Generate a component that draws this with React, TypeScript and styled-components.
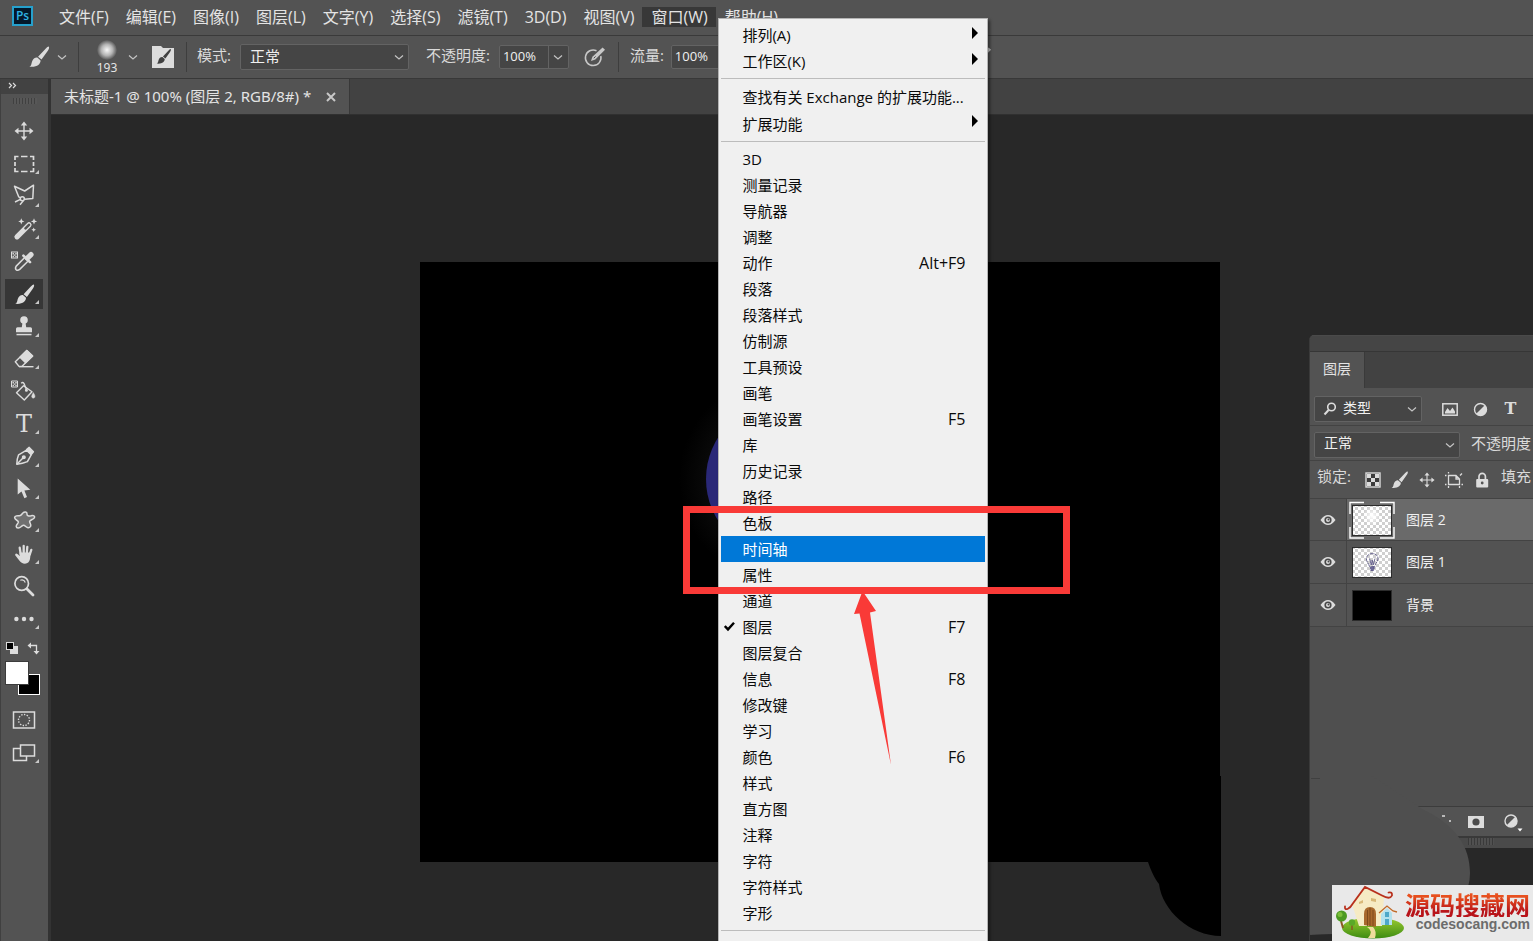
import React from "react";
import styled, { createGlobalStyle, css } from "styled-components";

const GlobalStyle = createGlobalStyle`
  *, *::before, *::after { box-sizing: border-box; }
  html, body { margin: 0; padding: 0; }
  body {
    background: #282828;
    color: #e4e4e4;
    font-family: "Open Sans", "Noto Sans CJK SC", sans-serif;
    font-size: 15px;
    overflow: hidden;
  }
  button, input, select {
    font: inherit;
    color: inherit;
    background: none;
    border: 0;
    padding: 0;
    margin: 0;
    outline: none;
    border-radius: 0;
  }
`;

const ink = "#dcdcdc";

/* ---------- page frame ---------- */

const Page = styled.div`
  position: relative;
  display: flex;
  flex-direction: column;
  height: 100vh;
  overflow: hidden;
  background: #282828;
`;

const MenuBar = styled.nav`
  display: flex;
  align-items: center;
  flex: none;
  height: 35px;
  padding-left: 12px;
  background: #535353;
`;

const Logo = styled.div`
  display: flex;
  align-items: center;
  justify-content: center;
  width: 21px;
  height: 20px;
  margin: 0 17px 4px 0;
  border: 2px solid #26a0cc;
  background: #04182a;
  color: #2fb4e4;
  font-size: 12px;
  font-weight: 600;
  line-height: 16px;
`;

const Titles = styled.div`
  display: flex;
`;

const MenuEntry = styled.div`
  position: relative;
`;

const MenuTitle = styled.button<{ $open?: boolean }>`
  display: block;
  height: 20px;
  margin-bottom: 1px;
  padding: 0 8px 0 9px;
  font-size: 16px;
  line-height: 18px;
  white-space: nowrap;
  background: ${(p) => (p.$open ? "#383838" : "transparent")};
`;

/* ---------- drop-down menu ---------- */

const Dropdown = styled.div`
  position: absolute;
  z-index: 5;
  top: 11px;
  left: 76px;
  width: 270px;
  padding: 3px 2px 24px;
  border: 1px solid #b4b4b4;
  background: #f0f0f0;
  box-shadow: 2px 2px 3px rgba(0, 0, 0, 0.45);
  color: #0a0a0a;
`;

const MenuItem = styled.button<{ $active?: boolean; $tall?: boolean }>`
  display: flex;
  align-items: center;
  position: relative;
  width: 100%;
  height: ${(p) => (p.$tall ? 27 : 26)}px;
  padding: 0 20px 0 21px;
  font-size: 15px;
  line-height: 24px;
  text-align: left;
  white-space: nowrap;
  ${(p) =>
    p.$active &&
    css`
      background: #0078d7;
      color: #fff;
    `}
`;

const ItemLabel = styled.span`
  flex: 1;
`;

const ItemKeys = styled.span`
  font-size: 16px;
`;

const ItemMark = styled.svg<{ $side: "left" | "right" }>`
  position: absolute;
  top: ${(p) => (p.$side === "left" ? 7 : 5)}px;
  ${(p) => (p.$side === "left" ? "left: 3px;" : "right: 7px;")}
`;

const Separator = styled.hr`
  height: 1px;
  margin: 4px 0;
  border: 0;
  background: #bcbcbc;
`;

/* ---------- options bar ---------- */

const OptionsBar = styled.div`
  display: flex;
  align-items: center;
  flex: none;
  height: 44px;
  padding-left: 28px;
  border-top: 1px solid #3a3a3a;
  border-bottom: 1px solid #383838;
  background: #535353;
`;

const IconButton = styled.button<{ $w: number }>`
  display: flex;
  align-items: center;
  justify-content: center;
  flex: none;
  width: ${(p) => p.$w}px;
  height: 30px;
  max-height: 100%;
`;

const Spacer = styled.span<{ $w: number }>`
  flex: none;
  width: ${(p) => p.$w}px;
`;

const Divider = styled.i<{ $before?: number; $after?: number }>`
  flex: none;
  width: 1px;
  height: 30px;
  margin: 0 ${(p) => p.$after ?? 0}px 0 ${(p) => p.$before ?? 0}px;
  background: #3e3e3e;
`;

const BrushTip = styled.button`
  display: flex;
  flex-direction: column;
  align-items: center;
  width: 26px;
  font-family: "Noto Sans", sans-serif;
  font-size: 12px;
  line-height: 15px;
`;

const TipDot = styled.span`
  width: 20px;
  height: 20px;
  border-radius: 50%;
  background: radial-gradient(circle, #f0f0f0 5%, #b4b4b4 40%, #535353 72%);
`;

const FieldLabel = styled.label`
  flex: none;
  padding-bottom: 4px;
  font-size: 15px;
  line-height: 20px;
  color: #dadada;
  white-space: nowrap;
`;

const SelectBox = styled.span<{ $w: number }>`
  display: flex;
  align-items: center;
  position: relative;
  flex: none;
  width: ${(p) => p.$w}px;
  height: 26px;
  border: 1px solid #636363;
  border-radius: 2px;
  background: #454545;
  svg {
    position: absolute;
    right: 4px;
    pointer-events: none;
  }
`;

const Select = styled.select<{ $indent?: number; $small?: boolean }>`
  appearance: none;
  width: 100%;
  height: 100%;
  padding: 0 18px 3px ${(p) => p.$indent ?? 9}px;
  font-size: ${(p) => (p.$small ? 14 : 15)}px;
  line-height: 20px;
  color: #f0f0f0;
`;

const ValueBox = styled.span`
  display: flex;
  flex: none;
  height: 24px;
  border: 1px solid #636363;
  border-radius: 2px;
  background: #454545;
`;

const ValueInput = styled.input`
  width: 49px;
  padding: 0 0 2px 3px;
  border-right: 1px solid #636363;
  font-size: 13px;
  line-height: 20px;
  color: #f0f0f0;
`;

/* ---------- body ---------- */

const Body = styled.div`
  display: flex;
  flex: 1;
  min-height: 0;
`;

const ToolColumn = styled.aside`
  flex: none;
  width: 51px;
  border-left: 1px solid #404040;
  border-right: 3px solid #333;
  background: #535353;
`;

const ToolHeader = styled.div`
  display: flex;
  align-items: center;
  height: 15px;
  padding: 0 0 2px 7px;
  background: #424242;
`;

const Grip = styled.div`
  width: 24px;
  height: 6px;
  margin: 4px auto 11px 12px;
  background: repeating-linear-gradient(90deg, #404040 0 1px, #575757 1px 3px);
`;

const ToolList = styled.div`
  display: flex;
  flex-direction: column;
  height: 520px;
  padding-left: 4px;
`;

const Tool = styled.button<{ $active?: boolean; $corner?: boolean }>`
  display: flex;
  align-items: center;
  justify-content: center;
  position: relative;
  flex: 1;
  width: 38px;
  min-height: 0;
  border: solid #535353;
  border-width: 1px 0;
  background: ${(p) => (p.$active ? "#363636" : "transparent")};
  ${(p) =>
    p.$corner &&
    css`
      &::after {
        content: "";
        position: absolute;
        right: 4px;
        bottom: 5px;
        border: 2px solid transparent;
        border-right-color: #c8c8c8;
        border-bottom-color: #c8c8c8;
      }
    `}
`;

const ColorArea = styled.div`
  display: flex;
  flex-direction: column;
  height: 66px;
  padding: 6px 4px 0 4px;
`;

const ModeList = styled.div`
  display: flex;
  flex-direction: column;
  height: 66px;
  margin-top: 2px;
  padding-left: 4px;
`;

const Workspace = styled.main`
  display: flex;
  flex-direction: column;
  flex: 1;
  min-width: 0;
`;

const TabBar = styled.div`
  display: flex;
  flex: none;
  height: 36px;
  background: #424242;
  border-bottom: 1px solid #303030;
`;

const DocTab = styled.div`
  display: flex;
  align-items: center;
  gap: 15px;
  height: 35px;
  padding: 0 13px 2px;
  border-right: 1px solid #383838;
  background: #535353;
  font-family: "Noto Sans", "Noto Sans CJK SC", sans-serif;
  font-size: 15px;
  line-height: 20px;
  white-space: nowrap;
`;

const Stage = styled.div`
  position: relative;
  flex: 1;
  background: #282828;
  overflow: hidden;
`;

const Artboard = styled.svg`
  position: absolute;
  left: 369px;
  top: 147px;
`;

/* ---------- layers panel ---------- */

const Panel = styled.section`
  position: absolute;
  right: 0;
  top: 220px;
  bottom: 0;
  display: flex;
  flex-direction: column;
  width: 224px;
  border-left: 1px solid #3a3a3a;
  border-radius: 5px 0 0 0;
  overflow: hidden;
  background: #4f4f4f;
  white-space: nowrap;
`;

const PanelHandle = styled.div`
  flex: none;
  height: 17px;
  border-top: 1px solid #4a4a4a;
  border-bottom: 1px solid #363636;
  background: #454545;
`;

const PanelTabs = styled.div`
  display: flex;
  flex: none;
  height: 36px;
  background: #424242;
`;

const PanelTab = styled.button`
  width: 55px;
  padding-bottom: 3px;
  border-right: 1px solid #3a3a3a;
  background: #535353;
  font-size: 14px;
  line-height: 20px;
`;

const PanelRow = styled.div<{ $h: number; $gap: number; $top?: number }>`
  display: flex;
  align-items: center;
  flex: none;
  gap: ${(p) => p.$gap}px;
  height: ${(p) => p.$h}px;
  padding: ${(p) => p.$top ?? 0}px 0 0 4px;
  border-bottom: 1px solid #434343;
  background: #535353;
`;

const FilterIcons = styled.div`
  display: flex;
  align-items: center;
  gap: 15px;
`;

const RowLabel = styled(FieldLabel)<{ $left?: number; $right?: number }>`
  padding: 0 ${(p) => p.$right ?? 0}px 8px ${(p) => p.$left ?? 0}px;
`;

const FilterGlass = styled.svg`
  left: 8px;
  && {
    right: auto;
  }
`;

const LayerRow = styled.div<{ $selected?: boolean }>`
  display: flex;
  flex: none;
  height: ${(p) => (p.$selected ? 42 : 43)}px;
  border-bottom: 1px solid #434343;
  background: ${(p) => (p.$selected ? "#6a6a6a" : "#535353")};
`;

const EyeButton = styled.button`
  width: 37px;
  border-right: 1px solid #434343;
  background: #535353;
  svg {
    display: block;
    margin: auto;
  }
`;

const LayerName = styled.button`
  display: flex;
  align-items: center;
  gap: 11px;
  flex: 1;
  padding-left: 2px;
  font-size: 14px;
  line-height: 20px;
  color: #f0f0f0;
`;

const PanelFooter = styled.div`
  display: flex;
  align-items: center;
  flex: none;
  gap: 18px;
  height: 32px;
  margin-top: 179px;
  padding-left: 157px;
  border-top: 1px solid #3c3c3c;
  border-bottom: 2px solid #393939;
  background: #535353;
`;

const FooterGrip = styled.div`
  flex: none;
  height: 10px;
  padding-left: 158px;
  background: #4a4a4a;
  &::before {
    content: "";
    display: block;
    width: 26px;
    height: 7px;
    background: repeating-linear-gradient(90deg, #3a3a3a 0 1px, #505050 1px 3px);
  }
`;

const PanelVoid = styled.div`
  flex: 1;
  background: #282828;
`;

const Smudge = styled.svg`
  position: absolute;
  left: 0;
  bottom: 0;
`;

/* ---------- overlays ---------- */

const Highlight = styled.div`
  position: absolute;
  z-index: 6;
  left: 683px;
  top: 506px;
  width: 387px;
  height: 88px;
  border: 7px solid #f93a37;
  pointer-events: none;
`;

const Pointer = styled.svg`
  position: absolute;
  z-index: 6;
  left: 850px;
  top: 588px;
  pointer-events: none;
`;

const SiteMark = styled.a`
  position: absolute;
  z-index: 7;
  right: 0;
  bottom: 0;
  display: flex;
  width: 201px;
  height: 56px;
  background: #e9e9e9;
  text-decoration: none;
`;

const SiteText = styled.span`
  display: flex;
  flex-direction: column;
  align-items: flex-end;
  padding-top: 6px;
`;

const SiteTitle = styled.span`
  font-family: "Noto Sans CJK SC", sans-serif;
  font-size: 25px;
  font-weight: 700;
  line-height: 26px;
  background: linear-gradient(#e8501e 20%, #b8141a 80%);
  background-clip: text;
  -webkit-background-clip: text;
  color: transparent;
`;

const SiteHost = styled.span`
  font-family: "Liberation Sans", sans-serif;
  font-size: 14px;
  font-weight: 700;
  line-height: 14px;
  color: #6c6c6c;
`;

/* ---------- icons ---------- */

const Chevron = () => (
  <svg width="10" height="10" viewBox="0 0 10 10" fill="none" stroke="#c4c4c4" strokeWidth="1.2">
    <path d="M1 3.5 5 7 9 3.5" />
  </svg>
);

const BrushShape = ({ fill = ink }: { fill?: string }) => (
  <g fill={fill}>
    <path d="M28.900 5.600C29.600 6.400 28.800 8.400 27.600 10L21.900 18 18.600 15.200 25.800 7.600C27.400 6 28.400 5.200 28.900 5.600Z" />
    <path d="M17.900 16 21 18.800C21 22.200 17.600 25.600 10.300 24.800 12.700 23.600 12 21.400 13.300 18.800 14.300 16.600 16.300 15.600 17.900 16Z" />
  </g>
);

const Checker = ({ x, y }: { x: number; y: number }) => (
  <g transform={`translate(${x} ${y})`}>
    <rect width="6" height="6" fill="none" stroke={ink} strokeWidth="1" />
    <path
      fill={ink}
      stroke="none"
      d="M1 1h1.400v1.400H1zM3.800 1h1.400v1.400H3.800zM2.400 2.400h1.400v1.400H2.400zM1 3.800h1.400v1.400H1zM3.800 3.800h1.400v1.400H3.800z"
    />
  </g>
);

const toolArt: Record<string, React.ReactNode> = {
  move: (
    <g stroke={ink} strokeWidth="1.4" fill={ink}>
      <path d="M19 8v14M12 15h14" />
      <path stroke="none" d="M19 5.500l3.200 4h-6.400zM19 24.500l3.200-4h-6.400zM9.500 15l4-3.200v6.400zM28.500 15l-4-3.200v6.400z" />
    </g>
  ),
  marquee: (
    <path
      fill="none"
      stroke={ink}
      strokeWidth="1.700"
      d="M10 11V7.500H13.500M16 7.500H22.500M25 7.500H28.500V11M28.500 13V17M28.500 19V22.500H25M22.500 22.500H16M13.500 22.500H10V19M10 17V13"
    />
  ),
  lasso: (
    <g fill="none" stroke={ink} strokeWidth="1.500" strokeLinejoin="round">
      <path d="M15.500 16.800 13.700 15.800 9.500 5.200 19.700 10 28.500 4.200 27.800 17.500 19.500 18.200" />
      <circle cx="17.300" cy="17.800" r="2" />
      <path d="M15.400 18.400 10 21M18.400 19.600 15 23.800" />
    </g>
  ),
  wand: (
    <g>
      <path d="M12 22.800 24 10.800" stroke={ink} strokeWidth="5.200" strokeLinecap="round" />
      <path d="M20.500 14.300 24 10.800" stroke="#535353" strokeWidth="2.600" strokeLinecap="round" />
      <path
        fill={ink}
        d="M16.300 4.300l.9 2.200 2.200.9-2.200.9-.9 2.200-.9-2.200-2.200-.9 2.200-.9zM29 4.300l.9 2.200 2.200.9-2.200.9-.9 2.200-.9-2.200-2.200-.9 2.200-.9zM28.700 13.400l.7 1.600 1.600.7-1.600.7-.7 1.600-.7-1.600-1.600-.7 1.600-.7z"
      />
    </g>
  ),
  eyedropper: (
    <g>
      <Checker x={6.5} y={6} />
      <path fill="none" stroke={ink} strokeWidth="1.500" strokeLinejoin="round" d="M19.500 11.800 11.200 20.100Q9.800 22.400 11.200 23.800 12.800 24.800 14.700 23.400L22.900 15.300" />
      <path d="M18.400 9.600 25 16.200" stroke={ink} strokeWidth="2.600" strokeLinecap="round" />
      <path d="M22.400 12.200 26 8.600" stroke={ink} strokeWidth="5.200" strokeLinecap="round" />
    </g>
  ),
  brush: <BrushShape />,
  stamp: (
    <g fill={ink}>
      <circle cx="19" cy="9" r="3.800" />
      <path d="M17.600 11h2.800l.8 5.200h4.300q1.500 0 1.500 1.500v3.600H11v-3.600q0-1.500 1.500-1.500h4.300z" />
      <path d="M11.500 22.800h15v1.500h-15z" />
    </g>
  ),
  eraser: (
    <g stroke={ink} strokeWidth="1.400" strokeLinejoin="round">
      <path fill="none" d="M10.300 17.800 21.800 6.600 27.600 12 16.800 22.400H14z" />
      <path fill={ink} d="M15 13.300 21.800 6.600 27.600 12 20.600 18.700z" />
      <path d="M14 22.700h14.500" />
    </g>
  ),
  bucket: (
    <g fill="none" stroke={ink} strokeWidth="1.400" strokeLinejoin="round">
      <Checker x={6.5} y={5} />
      <path d="M18.500 9.800 11.500 16.800 19.300 24 27 15.800z" />
      <path d="M16.200 7.200q1.800-1.600 2.800.4l2.600 6.400" />
      <circle cx="21.400" cy="14.200" r=".8" fill={ink} />
      <path fill={ink} d="M28.300 16.500q2.200 3.200 1.700 4.600-.7 1.200-1.900 1.100-1.400-.3-1.500-1.600 0-1.100 1.700-4.100z" strokeWidth=".4" />
    </g>
  ),
  pen: (
    <g fill="none" stroke={ink} strokeWidth="1.500" strokeLinejoin="round">
      <path d="M11.800 23.200Q11.800 18 13.600 13.800L21.600 9.200 26.200 13.800 22.400 20.600Q17.600 22.600 11.800 23.200z" />
      <path d="M11.800 23.200 18.200 16.800" />
      <circle cx="18.800" cy="16.200" r="1.300" fill={ink} />
      <path fill={ink} d="M21.600 8.600 24.200 6.400 28.400 10.800 26.400 13.400z" />
    </g>
  ),
  pointer: <path fill={ink} d="M12.700 4.500V20.500L16.500 17.400 19.400 24.200 22 23 19.400 16.600 25.300 15.800z" />,
  shape: (
    <path
      fill="#707070"
      stroke={ink}
      strokeWidth="1.500"
      strokeLinejoin="round"
      d="M17.600 7.200C19.400 5.600 22.200 5.600 22 8 21.800 9.800 23.600 10.400 26 9.800 28.800 9 30.600 10.400 29 12.200 27.400 13.800 24.600 14.200 24.600 15.600 24.600 17.200 26.600 18.400 25.600 20.400 24 22.600 21.800 21.600 20.400 20.200 19 18.800 17.800 19 16 20.800 14.400 22.400 11.400 22.600 11.200 20.400 11.200 18.600 13.200 17.600 13.400 16 13.400 14.200 9.600 14.200 9.600 11.600 9.800 9.600 12.800 9.600 14.400 9.800 16 9.800 16.600 8.600 17.600 7.200Z"
    />
  ),
  hand: (
    <g stroke={ink} strokeLinecap="round" fill={ink}>
      <path strokeWidth="2.300" d="M15.700 15 14.700 8.700M18.700 14V7M21.800 14 22.300 8M24.700 15.500 26.300 10.900" />
      <path stroke="none" d="M14.400 13.500H25.800L25 20Q24 24.600 20 24.700 16.300 24.700 14.300 21.600L10.200 16.200Q9.800 14.800 11.300 14.500 12.500 14.600 14.800 17z" />
    </g>
  ),
  zoom: (
    <g fill="none" stroke={ink}>
      <circle cx="16.700" cy="12.500" r="6.800" strokeWidth="1.700" />
      <path d="M15.300 9.200a4 4 0 0 1 5 2.200" strokeWidth="1.200" />
      <path d="M22 18 28 24" strokeWidth="2.800" strokeLinecap="round" />
    </g>
  ),
  more: (
    <g fill={ink}>
      <circle cx="11.400" cy="15" r="2.200" />
      <circle cx="19" cy="15" r="2.200" />
      <circle cx="26.500" cy="15" r="2.200" />
    </g>
  ),
};

const SlabT = styled.span<{ $size: number; $bold?: boolean }>`
  font-family: "DejaVu Serif", serif;
  font-size: ${(p) => p.$size}px;
  font-weight: ${(p) => (p.$bold ? 700 : 400)};
  line-height: 28px;
  color: ${ink};
`;

const ToolIcon = ({ name }: { name: string }) =>
  name === "type" ? (
    <SlabT $size={24}>T</SlabT>
  ) : (
    <svg width="38" height="30" viewBox="0 0 38 30">
      {toolArt[name]}
    </svg>
  );

const EyeIcon = () => (
  <svg width="16" height="12" viewBox="0 0 16 12">
    <path d="M.5 6Q4 1 8 1T15.500 6Q12 11 8 11T.5 6Z" fill={ink} />
    <circle cx="8" cy="6" r="3.600" fill="#484848" />
    <circle cx="8" cy="6" r="2" fill={ink} />
    <circle cx="8.500" cy="5.500" r="1" fill="#484848" />
  </svg>
);

const HalfCircle = () => (
  <svg width="15" height="15" viewBox="0 0 15 15">
    <circle cx="7.500" cy="7.500" r="6" fill="#535353" stroke={ink} strokeWidth="1.400" />
    <path d="M11.800 3.200A6 6 0 1 1 3.200 11.800Z" fill={ink} />
  </svg>
);

const PressureIcon = () => (
  <svg width="24" height="24" viewBox="0 0 24 24" fill="none" stroke="#c8c8c8" strokeWidth="1.500">
    <path d="M13.500 5.700A7.800 7.800 0 1 0 17.800 11" />
    <path d="M8 16 9.400 11.800 19.600 2.400 22 4.800 12.300 14.600z" fill="#c8c8c8" stroke="none" />
    <path d="M10.800 13.200 12.600 11.400" stroke="#535353" strokeWidth="1" />
  </svg>
);

type ThumbKind = "glow" | "bulb" | "black";

const Thumb = ({ kind }: { kind: ThumbKind }) => (
  <svg width="46" height="38" viewBox="0 0 46 38">
    <defs>
      <pattern id="thumbCheck" width="6" height="6" patternUnits="userSpaceOnUse">
        <rect width="6" height="6" fill="#fff" />
        <path d="M0 0h3v3H0zM3 3h3v3H3z" fill="#cfcfcf" />
      </pattern>
      <radialGradient id="thumbGlow">
        <stop offset="0" stopColor="#fff" />
        <stop offset="1" stopColor="#fff" stopOpacity="0" />
      </radialGradient>
    </defs>
    <rect x="3.500" y="4.500" width="39" height="30" fill={kind === "black" ? "#000" : "url(#thumbCheck)"} stroke="#2c2c2c" />
    {kind === "glow" && (
      <>
        <circle cx="23" cy="15" r="9" fill="url(#thumbGlow)" />
        <path d="M1 13V1.500H15M31 1.500H45V13M45 26V37H31M15 37H1V26" fill="none" stroke="#fff" strokeWidth="1.400" />
      </>
    )}
    {kind === "bulb" && (
      <g fill="none" stroke="#6a6690" strokeWidth="1">
        <path d="M20.500 23.500C20 20.500 17.200 19 17.400 15.500 18 11.500 21 10.600 23.200 10.600 26 10.600 29 12 29 15.600 28.800 19 26 20.500 25.800 23.500Z" strokeDasharray="4 .8" />
        <path d="M20.500 15.500 22.300 22 23.200 17 24.200 22 26 15.500" />
        <path d="M21 25h4.600M21.600 27h3.200" stroke="#3c3876" strokeWidth="1.600" />
      </g>
    )}
  </svg>
);

const House = () => (
  <svg width="73" height="56" viewBox="0 0 73 56">
    <defs>
      <linearGradient id="lawn" x1="0" y1="0" x2="0" y2="1">
        <stop offset="0" stopColor="#9ccc30" />
        <stop offset="1" stopColor="#3d8c12" />
      </linearGradient>
    </defs>
    <ellipse cx="41" cy="43" rx="31" ry="10.500" fill="url(#lawn)" />
    <path d="M9 36 11 43" stroke="#8a5a20" strokeWidth="2" />
    <circle cx="9.500" cy="31" r="5.500" fill="#4c9a22" />
    <circle cx="8" cy="29.500" r="2.500" fill="#7cbf3a" />
    <path d="M20 40v5" stroke="#8a5a20" strokeWidth="1.500" />
    <circle cx="20" cy="37.500" r="3.200" fill="#5aa828" />
    <path d="M20 19 33 3 52 12 50 41H27z" fill="#f6ebc4" />
    <path d="M32 40V29Q32 22 38 22T44 29V42z" fill="#a8682c" />
    <path d="M35.500 25V41M38 23V41M41 25V41" stroke="#754217" strokeWidth=".8" />
    <path d="M27 17l4-2v3l-4 1zM39 13l5 1v3l-5-1z" fill="#d8b878" />
    <path d="M49 29 55 23 60 28V40H49z" fill="#b4e2ee" />
    <path d="M53 27h4v5h-4zM53 34h4v6h-4z" fill="#4ea8c8" />
    <path d="M47 28 55 21 61 26 65 27" fill="none" stroke="#c06a28" strokeWidth="1.300" />
    <path d="M13 21.500Q12.500 25 15.500 24 18.500 22.800 20.500 19L33 2 50 10.500Q58 15 60 10.500 60.500 6.500 56.500 7.500" fill="none" stroke="#b8301c" strokeWidth="1.800" strokeLinecap="round" />
    <path d="M35 42Q42 46 36 53H43Q45 46 41 42z" fill="#f0dc9c" />
  </svg>
);

/* ---------- data ---------- */

const titlesBefore = ["文件(F)", "编辑(E)", "图像(I)", "图层(L)", "文字(Y)", "选择(S)", "滤镜(T)", "3D(D)", "视图(V)"];

type Entry = { label: string; keys?: string; sub?: boolean; checked?: boolean; active?: boolean };

const arrange: Entry[] = [
  { label: "排列(A)", sub: true },
  { label: "工作区(K)", sub: true },
];
const extensions: Entry[] = [
  { label: "查找有关 Exchange 的扩展功能..." },
  { label: "扩展功能", sub: true },
];
const panels: Entry[] = [
  { label: "3D" },
  { label: "测量记录" },
  { label: "导航器" },
  { label: "调整" },
  { label: "动作", keys: "Alt+F9" },
  { label: "段落" },
  { label: "段落样式" },
  { label: "仿制源" },
  { label: "工具预设" },
  { label: "画笔" },
  { label: "画笔设置", keys: "F5" },
  { label: "库" },
  { label: "历史记录" },
  { label: "路径" },
  { label: "色板" },
  { label: "时间轴", active: true },
  { label: "属性" },
  { label: "通道" },
  { label: "图层", keys: "F7", checked: true },
  { label: "图层复合" },
  { label: "信息", keys: "F8" },
  { label: "修改键" },
  { label: "学习" },
  { label: "颜色", keys: "F6" },
  { label: "样式" },
  { label: "直方图" },
  { label: "注释" },
  { label: "字符" },
  { label: "字符样式" },
  { label: "字形" },
];

const tools: { id: string; label: string; corner?: boolean }[] = [
  { id: "move", label: "移动工具" },
  { id: "marquee", label: "矩形选框工具", corner: true },
  { id: "lasso", label: "多边形套索工具", corner: true },
  { id: "wand", label: "魔棒工具", corner: true },
  { id: "eyedropper", label: "吸管工具" },
  { id: "brush", label: "画笔工具", corner: true },
  { id: "stamp", label: "仿制图章工具", corner: true },
  { id: "eraser", label: "橡皮擦工具", corner: true },
  { id: "bucket", label: "油漆桶工具" },
  { id: "type", label: "文字工具", corner: true },
  { id: "pen", label: "钢笔工具", corner: true },
  { id: "pointer", label: "路径选择工具", corner: true },
  { id: "shape", label: "自定形状工具", corner: true },
  { id: "hand", label: "抓手工具", corner: true },
  { id: "zoom", label: "缩放工具" },
  { id: "more", label: "编辑工具栏", corner: true },
];

const layers: { name: string; kind: ThumbKind; selected?: boolean }[] = [
  { name: "图层 2", kind: "glow", selected: true },
  { name: "图层 1", kind: "bulb" },
  { name: "背景", kind: "black" },
];

/* ---------- parts ---------- */

const Items = ({ list, tall }: { list: Entry[]; tall?: boolean }) => (
  <>
    {list.map((it) => (
      <MenuItem key={it.label} role="menuitem" $active={it.active} $tall={tall}>
        {it.checked && (
          <ItemMark $side="left" width="11" height="11" viewBox="0 0 11 11">
            <path d="M.8 5 4 8.400 10 1.800" fill="none" stroke="#000" strokeWidth="2.400" />
          </ItemMark>
        )}
        <ItemLabel>{it.label}</ItemLabel>
        {it.keys && <ItemKeys>{it.keys}</ItemKeys>}
        {it.sub && (
          <ItemMark $side="right" width="6" height="12" viewBox="0 0 6 12">
            <path d="M0 0 6 6 0 12Z" fill="#000" />
          </ItemMark>
        )}
      </MenuItem>
    ))}
  </>
);

const WindowMenu = () => (
  <Dropdown role="menu" aria-label="窗口">
    <Items list={arrange} />
    <Separator />
    <Items list={extensions} tall />
    <Separator />
    <Items list={panels} />
    <Separator />
  </Dropdown>
);

const Options = () => (
  <OptionsBar>
    <IconButton $w={22} aria-label="画笔">
      <svg width="22" height="22" viewBox="9 5 21 21">
        <BrushShape />
      </svg>
    </IconButton>
    <IconButton $w={24} aria-label="工具预设">
      <Chevron />
    </IconButton>
    <Divider $before={4} $after={15} />
    <BrushTip>
      <TipDot />
      193
    </BrushTip>
    <IconButton $w={26} aria-label="画笔预设">
      <Chevron />
    </IconButton>
    <IconButton $w={34} aria-label="画笔设置">
      <svg width="22" height="22" viewBox="0 0 22 22">
        <path d="M0 0H9l2 2H22V22H0z" fill={ink} />
        <g transform="translate(-3 -1) scale(.75)">
          <BrushShape fill="#404040" />
        </g>
      </svg>
    </IconButton>
    <Divider $before={6} $after={10} />
    <FieldLabel htmlFor="mode">模式:</FieldLabel>
    <Spacer $w={9} />
    <SelectBox $w={169}>
      <Select id="mode" defaultValue="正常">
        <option>正常</option>
      </Select>
      <Chevron />
    </SelectBox>
    <Spacer $w={17} />
    <FieldLabel htmlFor="opacity">不透明度:</FieldLabel>
    <Spacer $w={9} />
    <ValueBox>
      <ValueInput id="opacity" defaultValue="100%" />
      <IconButton $w={19} aria-label="不透明度选项">
        <Chevron />
      </IconButton>
    </ValueBox>
    <Spacer $w={13} />
    <IconButton $w={26} aria-label="始终对不透明度使用压力">
      <PressureIcon />
    </IconButton>
    <Divider $before={10} $after={11} />
    <FieldLabel htmlFor="flow">流量:</FieldLabel>
    <Spacer $w={7} />
    <ValueBox>
      <ValueInput id="flow" defaultValue="100%" />
      <IconButton $w={19} aria-label="流量选项">
        <Chevron />
      </IconButton>
    </ValueBox>
    <Spacer $w={227} />
    <IconButton $w={26} aria-label="始终对大小使用压力">
      <PressureIcon />
    </IconButton>
  </OptionsBar>
);

const Toolbox = () => (
  <ToolColumn>
    <ToolHeader>
      <svg width="9" height="7" viewBox="0 0 9 7" fill="none" stroke={ink} strokeWidth="1.200">
        <path d="M1 1 3.500 3.500 1 6M5 1 7.500 3.500 5 6" />
      </svg>
    </ToolHeader>
    <Grip />
    <ToolList>
      {tools.map((t) => (
        <Tool key={t.id} aria-label={t.label} $active={t.id === "brush"} $corner={t.corner}>
          <ToolIcon name={t.id} />
        </Tool>
      ))}
    </ToolList>
    <ColorArea>
      <svg width="38" height="58" viewBox="0 0 38 58">
        <rect x="5" y="5" width="8" height="8" fill={ink} />
        <rect x="1.500" y="1.500" width="7" height="7" fill="#000" stroke={ink} />
        <path d="M25 4.500h6.500V11" fill="none" stroke={ink} strokeWidth="1.300" />
        <path d="M22.500 4.500l3.500-3v6zM31.500 13.500l-3-3.500h6z" fill={ink} />
        <rect x="13.500" y="33.500" width="21" height="20" fill="#000" stroke="#fff" />
        <rect x=".5" y="20.500" width="23" height="23" fill="#fff" stroke="#3c3c3c" />
      </svg>
    </ColorArea>
    <ModeList>
      <Tool aria-label="以快速蒙版模式编辑">
        <svg width="38" height="30" viewBox="0 0 38 30" fill="none" stroke={ink}>
          <rect x="8.500" y="7" width="21" height="16" strokeWidth="1.500" />
          <circle cx="19" cy="15" r="5.500" strokeWidth="1.400" strokeDasharray="1.400 1.400" />
        </svg>
      </Tool>
      <Tool aria-label="更改屏幕模式" $corner>
        <svg width="38" height="30" viewBox="0 0 38 30" strokeWidth="1.500" stroke={ink}>
          <rect x="8.500" y="10.500" width="13" height="12" fill="#535353" />
          <rect x="15.500" y="7" width="14" height="11" fill="#535353" />
        </svg>
      </Tool>
    </ModeList>
  </ToolColumn>
);

const LayersPanel = () => (
  <Panel aria-label="图层">
    <PanelHandle />
    <PanelTabs>
      <PanelTab>图层</PanelTab>
    </PanelTabs>
    <PanelRow $h={38} $gap={20} $top={5}>
      <SelectBox $w={108}>
        <FilterGlass width="14" height="14" viewBox="0 0 14 14" fill="none" stroke={ink} strokeWidth="1.600">
          <circle cx="8.500" cy="5" r="3.800" />
          <path d="M5.600 8 1.500 12.500" strokeWidth="2" />
        </FilterGlass>
        <Select $indent={28} $small aria-label="图层过滤" defaultValue="类型">
          <option>类型</option>
        </Select>
        <Chevron />
      </SelectBox>
      <FilterIcons>
        <IconButton $w={16} aria-label="像素图层滤镜">
          <svg width="16" height="13" viewBox="0 0 16 13">
            <rect x=".8" y=".8" width="14.400" height="11.400" fill="none" stroke={ink} strokeWidth="1.500" />
            <path d="M3 10.500V9L5.500 5 8 8 10.500 4.500 13 8.500V10.500Z" fill={ink} />
          </svg>
        </IconButton>
        <IconButton $w={15} aria-label="调整图层滤镜">
          <HalfCircle />
        </IconButton>
        <IconButton $w={15} aria-label="文字图层滤镜">
          <SlabT $size={16} $bold>
            T
          </SlabT>
        </IconButton>
      </FilterIcons>
    </PanelRow>
    <PanelRow $h={35} $gap={11} $top={3}>
      <SelectBox $w={146}>
        <Select $small aria-label="混合模式" defaultValue="正常">
          <option>正常</option>
        </Select>
        <Chevron />
      </SelectBox>
      <FieldLabel as="span">不透明度</FieldLabel>
    </PanelRow>
    <PanelRow $h={38} $gap={10}>
      <RowLabel as="span" $left={3} $right={4}>
        锁定:
      </RowLabel>
      <svg width="16" height="16" viewBox="0 0 16 16">
        <rect x="1" y="1" width="14" height="14" fill="#3c3c3c" stroke={ink} strokeWidth="1.400" />
        <path d="M2 2h4v4H2zM10 2h4v4h-4zM6 6h4v4H6zM2 10h4v4H2zM10 10h4v4h-4z" fill={ink} />
      </svg>
      <svg width="18" height="18" viewBox="10 5 20 21">
        <BrushShape />
      </svg>
      <svg width="16" height="16" viewBox="9 5 20 20">
        {toolArt.move}
      </svg>
      <svg width="18" height="16" viewBox="0 0 18 16" fill="none" stroke={ink} strokeWidth="1.300">
        <path d="M0 3.500H1.500M3.500 0V1.500M3.500 3.500H11L14.500 7V12.500H3.500ZM11 3.500V7H14.500M16.500 12.500H18M14.500 14V16M3.500 14V16M0 12.500H1.500M15 3.500 17 1.500" />
      </svg>
      <svg width="18" height="16" viewBox="0 0 18 16">
        <path d="M6 8V4.500a3.200 3.200 0 0 1 6.400 0V8" fill="none" stroke={ink} strokeWidth="1.700" />
        <rect x="3.200" y="7" width="12" height="8.500" rx="1" fill={ink} />
        <circle cx="9.200" cy="11" r="1.400" fill="#535353" />
      </svg>
      <RowLabel as="span">填充</RowLabel>
    </PanelRow>
    {layers.map((l) => (
      <LayerRow key={l.name} $selected={l.selected}>
        <EyeButton aria-label={`显示 ${l.name}`}>
          <EyeIcon />
        </EyeButton>
        <LayerName>
          <Thumb kind={l.kind} />
          {l.name}
        </LayerName>
      </LayerRow>
    ))}
    <PanelFooter>
      <svg width="18" height="14" viewBox="0 0 18 14">
        <rect x="1" y="1" width="16" height="12" fill={ink} />
        <circle cx="9" cy="7" r="3.600" fill="#4a4a4a" />
      </svg>
      <svg width="20" height="20" viewBox="0 0 20 20">
        <circle cx="8" cy="9" r="6" fill="#535353" stroke={ink} strokeWidth="1.400" />
        <path d="M12.300 4.700A6 6 0 1 1 3.700 13.300Z" fill={ink} />
        <path d="M14.500 16.500h5l-2.500 3z" fill="#fff" />
      </svg>
    </PanelFooter>
    <FooterGrip />
    <PanelVoid />
    <Smudge width="164" height="166" viewBox="0 0 164 166">
      <path d="M0 0H60Q92 20 112 34C146 50 160 72 160 98 160 136 120 156 60 158L0 160Z" fill="#4f4f4f" />
      <path d="M1 3.500H10" stroke="#404040" />
      <path d="M132 41h3M139 46h2" stroke={ink} strokeWidth="1.400" />
      <path d="M0 160 60 158 164 110V166H0Z" fill="#282828" />
    </Smudge>
  </Panel>
);

export default function App() {
  return (
    <Page>
      <GlobalStyle />
      <MenuBar>
        <Logo>Ps</Logo>
        <Titles>
          {titlesBefore.map((t) => (
            <MenuTitle key={t}>{t}</MenuTitle>
          ))}
          <MenuEntry>
            <MenuTitle $open aria-haspopup="menu" aria-expanded>
              窗口(W)
            </MenuTitle>
            <WindowMenu />
          </MenuEntry>
          <MenuTitle>帮助(H)</MenuTitle>
        </Titles>
      </MenuBar>
      <Options />
      <Body>
        <Toolbox />
        <Workspace>
          <TabBar>
            <DocTab>
              未标题-1 @ 100% (图层 2, RGB/8#) *
              <button aria-label="关闭">
                <svg width="10" height="10" viewBox="0 0 10 10" stroke="#c8c8c8" strokeWidth="2">
                  <path d="M1 1 9 9M9 1 1 9" />
                </svg>
              </button>
            </DocTab>
          </TabBar>
          <Stage>
            <Artboard width="802" height="676" viewBox="0 0 802 676">
              <defs>
                <radialGradient id="halo">
                  <stop offset="0.700" stopColor="#0a0a0a" />
                  <stop offset="1" stopColor="#000" />
                </radialGradient>
              </defs>
              <path d="M0 0H800V514H801V674C770 674 742 648 739 622 735 617 731 609 728 600H0Z" fill="#000" />
              <circle cx="364" cy="217" r="105" fill="url(#halo)" />
              <circle cx="364" cy="217" r="78" fill="#2a2878" />
            </Artboard>
            <LayersPanel />
          </Stage>
        </Workspace>
      </Body>
      <Highlight />
      <Pointer width="44" height="180" viewBox="0 0 44 180">
        <path d="M12.500 3 26 23 20 24.500 41 177 9.500 25.500 4 26Z" fill="#f93a37" />
      </Pointer>
      <SiteMark href="#codesocang">
        <House />
        <SiteText>
          <SiteTitle>源码搜藏网</SiteTitle>
          <SiteHost>codesocang.com</SiteHost>
        </SiteText>
      </SiteMark>
    </Page>
  );
}
